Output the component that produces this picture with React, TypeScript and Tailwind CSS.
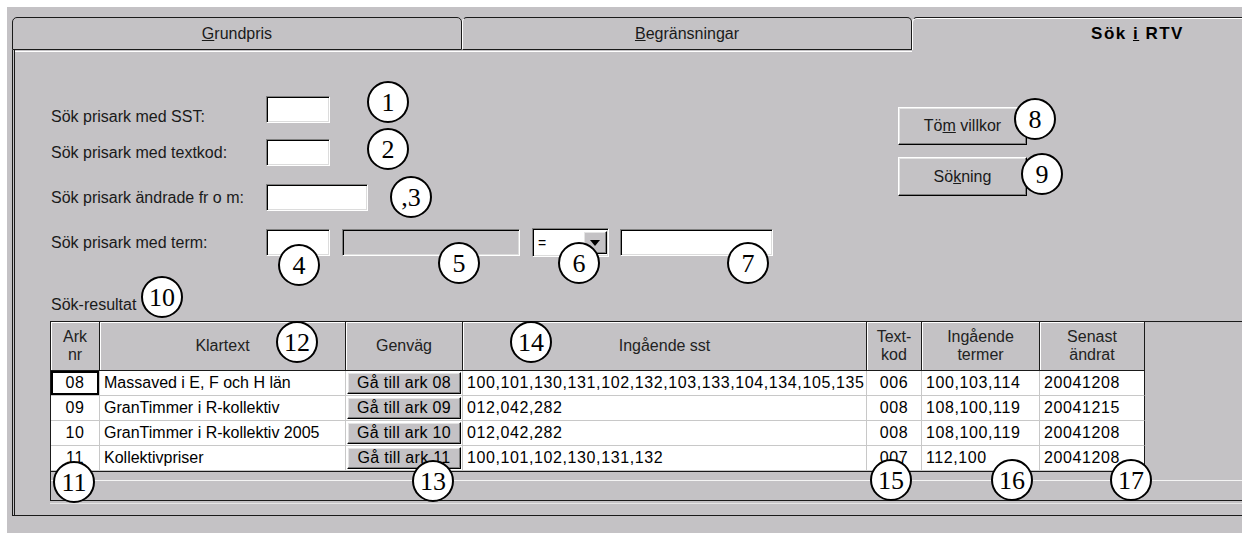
import React from 'react';

// classic win32 bevels
const sunken =
  'border border-t-[#808080] border-l-[#808080] border-r-white border-b-white shadow-[inset_1px_1px_0_#000,inset_-1px_-1px_0_#dcdcdc]';
const raised =
  'border border-t-white border-l-white border-r-black border-b-black shadow-[inset_-1px_-1px_0_#808080,inset_1px_1px_0_#e4e4e4]';

const columns = [
  { w: 'w-[49px]', head: ['Ark', 'nr'], align: 'text-center' },
  { w: 'w-[246px]', head: ['Klartext'], align: 'text-left' },
  { w: 'w-[117px]', head: ['Genväg'], align: 'text-center' },
  { w: 'w-[404px]', head: ['Ingående sst'], align: 'text-left' },
  { w: 'w-[55px]', head: ['Text-', 'kod'], align: 'text-center' },
  { w: 'w-[118px]', head: ['Ingående', 'termer'], align: 'text-left' },
  { w: 'w-[105px]', head: ['Senast', 'ändrat'], align: 'text-left' },
];

const rows = [
  ['08', 'Massaved i E, F och H län', 'Gå till ark 08', '100,101,130,131,102,132,103,133,104,134,105,135', '006', '100,103,114', '20041208'],
  ['09', 'GranTimmer i R-kollektiv', 'Gå till ark 09', '012,042,282', '008', '108,100,119', '20041215'],
  ['10', 'GranTimmer i R-kollektiv 2005', 'Gå till ark 10', '012,042,282', '008', '108,100,119', '20041208'],
  ['11', 'Kollektivpriser', 'Gå till ark 11', '100,101,102,130,131,132', '007', '112,100', '20041208'],
];

// numbered callouts drawn over the screenshot
const marks = [
  { n: '1', pos: 'left-[367px] top-[81px]' },
  { n: '2', pos: 'left-[367px] top-[128px]' },
  { n: ',3', pos: 'left-[390px] top-[176px]' },
  { n: '4', pos: 'left-[278px] top-[244px]' },
  { n: '5', pos: 'left-[438px] top-[242px]' },
  { n: '6', pos: 'left-[558px] top-[242px]' },
  { n: '7', pos: 'left-[727px] top-[242px]' },
  { n: '8', pos: 'left-[1014px] top-[98px]' },
  { n: '9', pos: 'left-[1021px] top-[153px]' },
  { n: '10', pos: 'left-[141px] top-[276px]' },
  { n: '11', pos: 'left-[53px] top-[461px]' },
  { n: '12', pos: 'left-[276px] top-[321px]' },
  { n: '13', pos: 'left-[412px] top-[460px]' },
  { n: '14', pos: 'left-[510px] top-[321px]' },
  { n: '15', pos: 'left-[870px] top-[459px]' },
  { n: '16', pos: 'left-[991px] top-[459px]' },
  { n: '17', pos: 'left-[1110px] top-[459px]' },
];

const Field = ({ w, gray }: { w: string; gray?: boolean }) => (
  <div className={`${w} h-[27px] shrink-0 ${sunken} ${gray ? 'bg-[#c4c2c5]' : 'bg-white'}`} />
);

const Label = ({ children }: { children: React.ReactNode }) => (
  <div className="w-[215px] shrink-0 text-[#1a1a1a] leading-[20px]">{children}</div>
);

const Tabs = () => (
  <div className="flex h-[33px] w-[1400px]">
    <div className="w-[450px] h-[33px] border border-[#1a1a1a] rounded-t-[5px] flex items-center justify-center text-[#1a1a1a]">
      <span>
        <span className="underline">G</span>rundpris
      </span>
    </div>
    <div className="w-[450px] h-[33px] border border-[#1a1a1a] border-l-white rounded-t-[5px] flex items-center justify-center text-[#1a1a1a]">
      <span>
        <span className="underline">B</span>egränsningar
      </span>
    </div>
    <div className="w-[450px] h-[33px] border-t border-l border-[#1a1a1a] border-l-white rounded-tl-[5px] shadow-[inset_0_1px_0_#fff] flex items-center justify-center">
      <span className="font-bold text-[17px] tracking-[1.5px]">
        Sök <span className="underline">i</span> RTV
      </span>
    </div>
  </div>
);

const Grid = () => (
  <div className="ml-[35px] mt-[7px] w-[1300px] h-[180px] border-t border-l border-b border-[#1a1a1a] bg-[#c4c2c5] flex flex-col">
    {/* header */}
    <div className="flex h-[49px] shrink-0">
      {columns.map((c, i) => (
        <div
          key={i}
          className={`${c.w} h-[49px] shrink-0 border-r border-b border-[#1a1a1a] shadow-[inset_1px_1px_0_#fff] flex flex-col items-center justify-center leading-[18px] text-[#222]`}
        >
          {c.head.map((h) => (
            <span key={h}>{h}</span>
          ))}
        </div>
      ))}
    </div>
    {/* rows */}
    {rows.map((r, ri) => (
      <div key={ri} className="flex h-[25px] shrink-0">
        {r.map((v, ci) => {
          const col = columns[ci];
          const last = ci === r.length - 1;
          if (ci === 2) {
            return (
              <div key={ci} className={`${col.w} h-[25px] shrink-0 bg-white border-r border-b border-[#c8c8c8] p-[1px]`}>
                <div className={`h-full bg-[#c4c2c5] ${raised} flex items-center justify-center leading-none whitespace-nowrap tracking-[0.3px]`}>
                  {v}
                </div>
              </div>
            );
          }
          const numeric = ci !== 1;
          return (
            <div
              key={ci}
              className={`${col.w} h-[25px] shrink-0 bg-white border-b border-[#c8c8c8] border-r ${last ? 'border-r-[#1a1a1a]' : ''} ${col.align} px-[4px] leading-[24px] whitespace-nowrap overflow-hidden ${numeric ? 'tracking-[0.6px]' : ''} ${ri === 0 && ci === 0 ? 'shadow-[inset_0_0_0_2px_#000]' : ''}`}
            >
              {v}
            </div>
          );
        })}
      </div>
    ))}
    <div className="w-[1094px] h-[1px] shrink-0 bg-[#1a1a1a]" />
    <div className="h-[8px] shrink-0" />
    <div className="h-[1px] shrink-0 bg-[#f4f4f4]" />
    <div className="flex-1" />
  </div>
);

export default function App() {
  return (
    <div className="relative w-[1242px] h-[533px] overflow-hidden bg-white pl-[7px] pt-[7px] font-['Liberation_Sans',Arial,sans-serif] text-[16px] text-black">
      <div className="h-full bg-[#c4c2c5] pl-[5px] pt-[10px]">
        <Tabs />
        <div className="w-[1300px] h-[466px] border-l border-b border-[#1a1a1a]">
          <div className="h-full ml-[1px] border-l border-[#1a1a1a] flex flex-col">
            <div className="w-[897px] h-[1px] mt-[1px] bg-white shrink-0" />

            {/* search conditions */}
            <div className="flex mt-[44px] pl-[36px] shrink-0">
              <div className="w-[847px] shrink-0 flex flex-col">
                <div className="flex items-center h-[27px]">
                  <Label>
                    <span className="relative top-[7px]">Sök prisark med SST:</span>
                  </Label>
                  <Field w="w-[64px]" />
                </div>
                <div className="flex items-center h-[27px] mt-[16px]">
                  <Label>Sök prisark med textkod:</Label>
                  <Field w="w-[64px]" />
                </div>
                <div className="flex items-center h-[27px] mt-[18px]">
                  <Label>Sök prisark ändrade fr o m:</Label>
                  <Field w="w-[102px]" />
                </div>
                <div className="flex items-center h-[29px] mt-[17px]">
                  <Label>Sök prisark med term:</Label>
                  <Field w="w-[64px]" />
                  <div className="ml-[12px]">
                    <Field w="w-[178px]" gray />
                  </div>
                  <div className={`ml-[12px] w-[77px] h-[29px] shrink-0 bg-white ${sunken} flex items-center`}>
                    <span className="flex-1 pl-[5px] text-[14px] leading-none">=</span>
                    <div className={`w-[24px] h-[23px] mr-[1px] bg-[#c4c2c5] ${raised} flex items-center justify-center`}>
                      <svg width="10" height="6" viewBox="0 0 10 6">
                        <path d="M0 0h10L5 6z" fill="#000" />
                      </svg>
                    </div>
                  </div>
                  <div className="ml-[11px]">
                    <Field w="w-[153px]" />
                  </div>
                </div>
              </div>
              <div className="flex flex-col pt-[11px] gap-[12px]">
                <button className={`w-[129px] h-[38px] bg-[#c4c2c5] ${raised} text-[#1a1a1a]`}>
                  Tö<span className="underline">m</span> villkor
                </button>
                <button className={`w-[129px] h-[39px] bg-[#c4c2c5] ${raised} text-[#1a1a1a]`}>
                  Sö<span className="underline">k</span>ning
                </button>
              </div>
            </div>

            <div className="mt-[39px] pl-[36px] h-[18px] leading-[18px] text-[#1a1a1a] shrink-0">Sök-resultat</div>

            <Grid />
            <div className="ml-[35px] mt-[2px] w-[1300px] h-[1px] bg-[#e6e6e6] shrink-0" />
          </div>
        </div>
      </div>

      {marks.map((m) => (
        <div
          key={m.n}
          className={`absolute ${m.pos} w-[42px] h-[42px] rounded-full border-2 border-black bg-white flex items-center justify-center font-['Liberation_Serif','Times_New_Roman',serif] text-[26px] leading-none`}
        >
          <span className="relative top-[1px]">{m.n}</span>
        </div>
      ))}
    </div>
  );
}
